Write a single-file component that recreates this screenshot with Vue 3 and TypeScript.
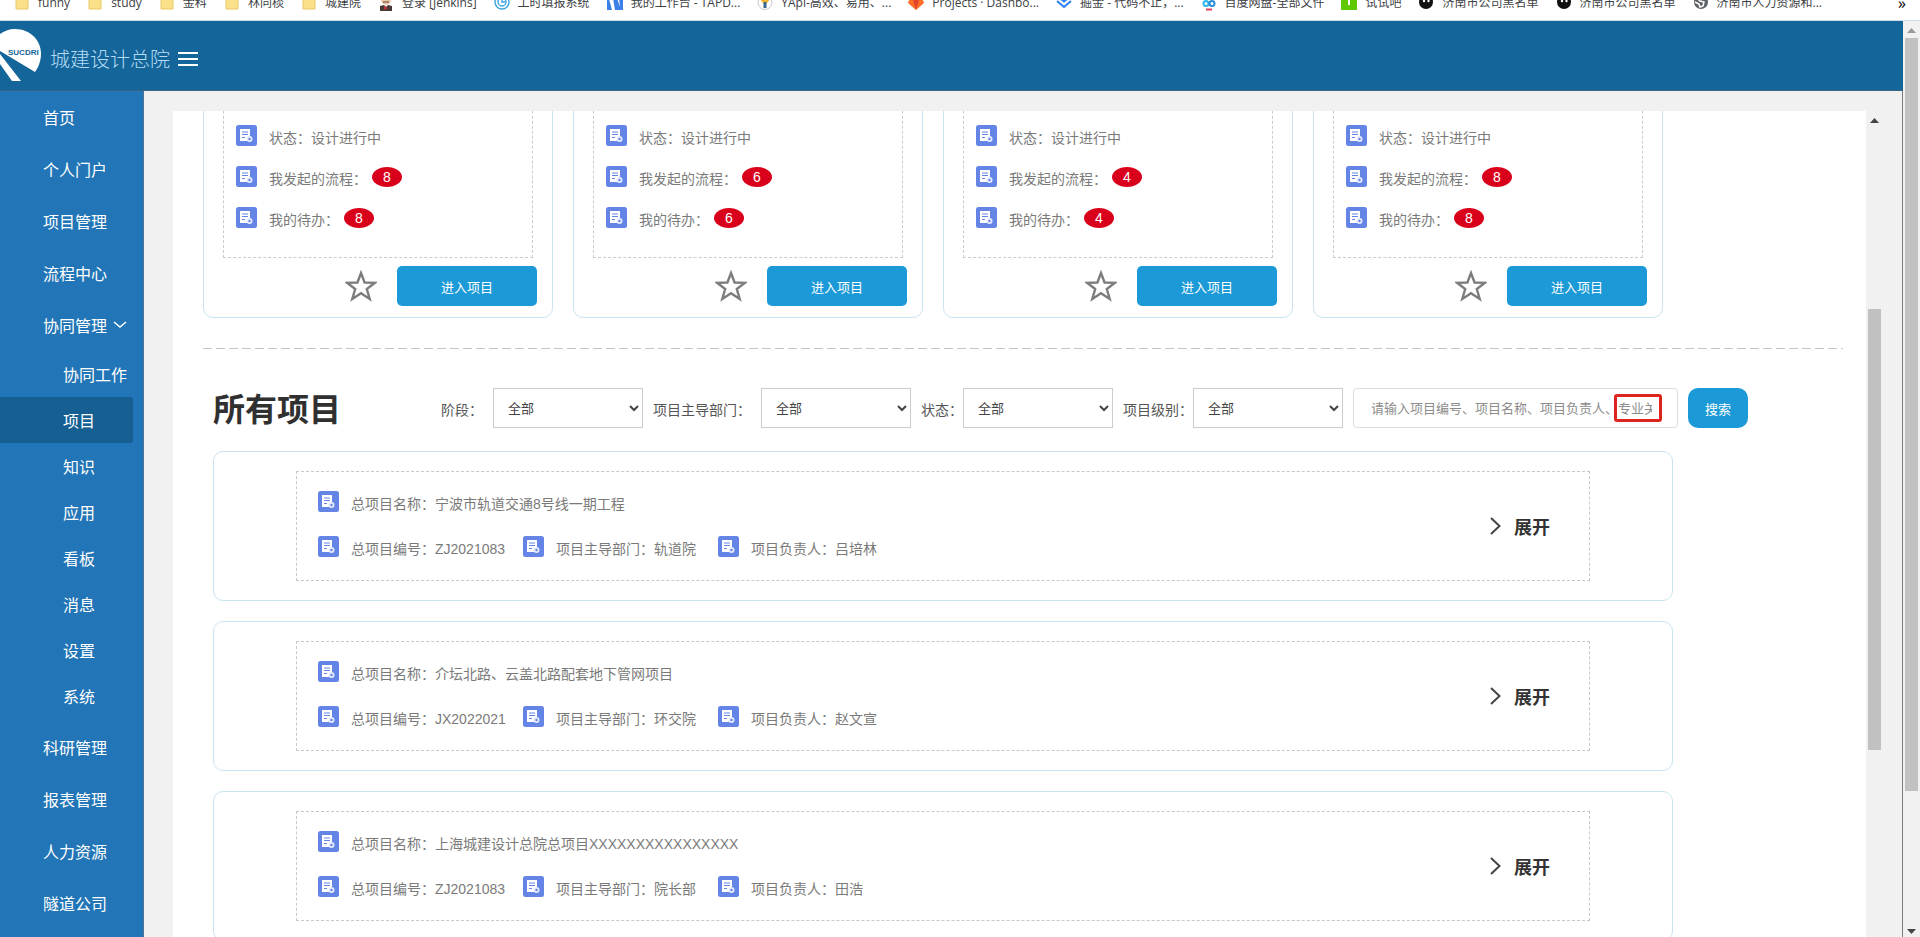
<script setup lang="ts">
import { ref } from 'vue'

interface Bookmark { icon: string; text: string }
interface ActiveProject { status: string; started: number; todo: number }
interface Project { name: string; code: string; dept: string; owner: string }
interface Filter { id: string; label: string; tight: boolean; value: string }

const bookmarks: Bookmark[] = [
  { icon: 'folder', text: 'funny' },
  { icon: 'folder', text: 'study' },
  { icon: 'folder', text: '金科' },
  { icon: 'folder', text: '林同棪' },
  { icon: 'folder', text: '城建院' },
  { icon: 'jenkins', text: '登录 [Jenkins]' },
  { icon: 'clock', text: '工时填报系统' },
  { icon: 'tapd', text: '我的工作台 - TAPD...' },
  { icon: 'yapi', text: 'YApi-高效、易用、...' },
  { icon: 'gitlab', text: 'Projects · Dashbo...' },
  { icon: 'juejin', text: '掘金 - 代码不止，...' },
  { icon: 'pan', text: '百度网盘-全部文件' },
  { icon: 'shishi', text: '试试吧' },
  { icon: 'penguin', text: '济南市公司黑名单' },
  { icon: 'penguin', text: '济南市公司黑名单' },
  { icon: 'globe', text: '济南市人力资源和...' },
]

const menuTop = ['首页', '个人门户', '项目管理', '流程中心']
const subMenu = ['协同工作', '项目', '知识', '应用', '看板', '消息', '设置', '系统']
const menuBottom = ['科研管理', '报表管理', '人力资源', '隧道公司']
const activeSub = ref('项目')

const activeProjects: ActiveProject[] = [
  { status: '设计进行中', started: 8, todo: 8 },
  { status: '设计进行中', started: 6, todo: 6 },
  { status: '设计进行中', started: 4, todo: 4 },
  { status: '设计进行中', started: 8, todo: 8 },
]

const filters = ref<Filter[]>([
  { id: 'stage', label: '阶段：', tight: false, value: '全部' },
  { id: 'dept', label: '项目主导部门：', tight: false, value: '全部' },
  { id: 'status', label: '状态：', tight: true, value: '全部' },
  { id: 'level', label: '项目级别：', tight: true, value: '全部' },
])
const keyword = ref('')

const projects: Project[] = [
  { name: '宁波市轨道交通8号线一期工程', code: 'ZJ2021083', dept: '轨道院', owner: '吕培林' },
  { name: '介坛北路、云盖北路配套地下管网项目', code: 'JX2022021', dept: '环交院', owner: '赵文宣' },
  { name: '上海城建设计总院总项目XXXXXXXXXXXXXXXX', code: 'ZJ2021083', dept: '院长部', owner: '田浩' },
]
</script>

<template>
  <div class="page">
    <svg width="0" height="0" class="defs" aria-hidden="true">
      <symbol id="doc" viewBox="0 0 21 21">
        <rect width="21" height="21" rx="2.500" fill="#6585e6" />
        <path d="M4 4h10v6.500l-2 3.500 1 2H4z" fill="#fff" />
        <path d="M6 7h6M6 9.500h6M6 12.500h3" stroke="#6585e6" stroke-width="1" />
        <circle cx="13.500" cy="14" r="3" fill="#e6ecff" />
        <circle cx="13.500" cy="14" r="1.200" fill="#6585e6" />
      </symbol>
    </svg>

    <nav class="bookmarks" aria-label="书签">
      <div class="bookmark-row">
        <a v-for="(b, i) in bookmarks" :key="i" href="#" class="bookmark">
          <svg class="fav" viewBox="0 0 16 16" aria-hidden="true">
            <path v-if="b.icon === 'folder'" d="M2 1h12v13H2z" fill="#fbe08a" stroke="#e8c766" />
            <g v-else-if="b.icon === 'jenkins'">
              <circle cx="8" cy="5" r="5" fill="#eec9a8" />
              <path d="M2 16V11l4-1 2 2 2-2 4 1v5z" fill="#4a3a35" />
              <path d="M6 11l4 2-4 2z" fill="#c3303a" />
              <path d="M5 7h6" stroke="#5a4036" />
            </g>
            <g v-else-if="b.icon === 'clock'" fill="none" stroke="#3aa3e0" stroke-width="1.400">
              <circle cx="8" cy="7" r="7" /><circle cx="8" cy="7" r="4" /><path d="M8 4v3h3" />
            </g>
            <g v-else-if="b.icon === 'tapd'">
              <path d="M0 0h16v15H0z" fill="#3d7fe8" />
              <path d="M2 4l4-1 2 12H5zM10 3h2l1 9z" fill="#fff" />
            </g>
            <g v-else-if="b.icon === 'yapi'">
              <circle cx="8" cy="7.500" r="7" fill="#fff" stroke="#c9c9c9" />
              <path d="M4 3l4 5 4-5" fill="none" stroke="#f0b429" stroke-width="3" />
              <path d="M8 7v6" stroke="#39668f" stroke-width="3" />
            </g>
            <g v-else-if="b.icon === 'gitlab'">
              <path d="M8 15L0 8 3 0l2 5h6l2-5 3 8z" fill="#fc6d26" />
              <path d="M8 15L5 5h6z" fill="#e24329" />
            </g>
            <path v-else-if="b.icon === 'juejin'" d="M1 6l7 6 7-6M5 4l3 2.500L11 4" fill="none" stroke="#2a7ff0" stroke-width="2" />
            <g v-else-if="b.icon === 'pan'" fill="none" stroke-width="2">
              <circle cx="5" cy="8.500" r="2.500" stroke="#29b6e8" />
              <circle cx="11" cy="8.500" r="2.500" stroke="#2a8fd8" />
              <path d="M5 14.500h6" stroke="#e5405a" />
            </g>
            <g v-else-if="b.icon === 'shishi'">
              <path d="M0 0h16v15H0z" fill="#5fc800" /><path d="M8 2v8" stroke="#fff" stroke-width="2" />
            </g>
            <g v-else-if="b.icon === 'penguin'">
              <circle cx="8" cy="7" r="7" fill="#111" />
              <circle cx="6" cy="6" r="1.200" fill="#fff" /><circle cx="10.500" cy="6" r="1.200" fill="#fff" />
            </g>
            <g v-else>
              <circle cx="8" cy="7" r="7" fill="#5f6368" />
              <path d="M4 3l3 3 4 1-1 4-3 1-1-3-4-2M9 1l3 3" fill="none" stroke="#fff" stroke-width="1.500" />
            </g>
          </svg>
          <span>{{ b.text }}</span>
        </a>
        <button class="more" type="button" aria-label="更多书签">»</button>
      </div>
    </nav>

    <div class="viewport">
      <div class="app">
        <header class="topbar">
          <svg class="logo" viewBox="0 0 42 54" aria-hidden="true">
            <path d="M0 5C4 2 9 0 15 0c15 0 26 11 26 25 0 7-3 14-6 18L0 22z" fill="#fff" />
            <path d="M0 25l21 27h-9L0 35z" fill="#fff" />
            <text x="8" y="26" font-size="8" font-weight="700" fill="#14659a" font-family="Liberation Sans, sans-serif">SUCDRI</text>
          </svg>
          <span class="brand">城建设计总院</span>
          <button class="burger" type="button" aria-label="折叠菜单">
            <svg width="20" height="16" viewBox="0 0 20 16"><path d="M0 2h20M0 8h20M0 14h20" stroke="#fff" stroke-width="2" /></svg>
          </button>
        </header>

        <div class="body">
          <aside class="sidebar">
            <a v-for="m in menuTop" :key="m" href="#" class="item">{{ m }}</a>
            <a href="#" class="item">协同管理
              <svg width="14" height="8" viewBox="0 0 14 8"><path d="M1 1l6 5 6-5" fill="none" stroke="#fff" stroke-width="1.500" /></svg>
            </a>
            <div class="sub">
              <a v-for="s in subMenu" :key="s" href="#" class="sub-item" :class="{ active: s === activeSub }" @click.prevent="activeSub = s">{{ s }}</a>
            </div>
            <a v-for="m in menuBottom" :key="m" href="#" class="item">{{ m }}</a>
          </aside>

          <main class="main">
            <div class="panel">
              <div class="content">
                <section class="cards">
                  <article v-for="(p, i) in activeProjects" :key="i" class="card">
                    <div class="card-info">
                      <div class="line"><svg class="doc"><use href="#doc" /></svg><span>状态：{{ p.status }}</span></div>
                      <div class="line"><svg class="doc"><use href="#doc" /></svg><span>我发起的流程：</span><b class="badge">{{ p.started }}</b></div>
                      <div class="line"><svg class="doc"><use href="#doc" /></svg><span>我的待办：</span><b class="badge">{{ p.todo }}</b></div>
                    </div>
                    <div class="card-actions">
                      <button class="star" type="button" aria-label="收藏">
                        <svg width="32" height="32" viewBox="0 0 32 32"><path d="M16 3l3.600 9.500 10.400.3-8.200 6.200 2.900 10L16 23.200 7.300 29l2.900-10L2 12.800l10.400-.3z" fill="none" stroke="#7d7d7d" stroke-width="2.400" /></svg>
                      </button>
                      <button class="enter" type="button">进入项目</button>
                    </div>
                  </article>
                </section>

                <hr class="divider" />

                <form class="toolbar" @submit.prevent>
                  <h2>所有项目</h2>
                  <div v-for="f in filters" :key="f.id" class="filter" :class="{ tight: f.tight }">
                    <label :for="f.id">{{ f.label }}</label>
                    <select :id="f.id" v-model="f.value"><option>全部</option></select>
                  </div>
                  <div class="search">
                    <input v-model="keyword" type="text" aria-label="关键字" placeholder="请输入项目编号、项目名称、项目负责人、专业关键字" />
                    <span class="mark"></span>
                  </div>
                  <button class="go" type="submit">搜索</button>
                </form>

                <section class="list">
                  <article v-for="(p, i) in projects" :key="i" class="row">
                    <div class="row-inner">
                      <div class="row-info">
                        <div class="line"><svg class="doc"><use href="#doc" /></svg><span>总项目名称：{{ p.name }}</span></div>
                        <div class="meta">
                          <div class="line"><svg class="doc"><use href="#doc" /></svg><span>总项目编号：{{ p.code }}</span></div>
                          <div class="line"><svg class="doc"><use href="#doc" /></svg><span>项目主导部门：{{ p.dept }}</span></div>
                          <div class="line"><svg class="doc"><use href="#doc" /></svg><span>项目负责人：{{ p.owner }}</span></div>
                        </div>
                      </div>
                      <button class="expand" type="button">
                        <svg width="12" height="20" viewBox="0 0 12 20"><path d="M1 2l8.500 8L1 18" fill="none" stroke="#444" stroke-width="2" /></svg>
                        展开
                      </button>
                    </div>
                  </article>
                </section>
              </div>
            </div>
            <div class="bar inner-bar">
              <svg width="9" height="5" viewBox="0 0 9 5"><path d="M0 5l4.500-5L9 5z" fill="#444" /></svg>
              <div class="inner-track"><i class="inner-thumb"></i></div>
            </div>
          </main>
        </div>
      </div>
      <div class="bar outer-bar">
        <svg width="9" height="5" viewBox="0 0 9 5"><path d="M0 5l4.500-5L9 5z" fill="#999" /></svg>
        <div class="outer-track"><i class="outer-thumb"></i></div>
        <svg width="9" height="5" viewBox="0 0 9 5"><path d="M0 0l4.500 5L9 0z" fill="#444" /></svg>
      </div>
    </div>
  </div>
</template>

<style>
body { margin: 0; overflow: hidden; }
</style>

<style scoped>
* { box-sizing: border-box; }
.page {
  height: 100vh;
  display: flex;
  flex-direction: column;
  overflow: hidden;
  background: #fff;
  color: #666;
  font-family: "Liberation Sans", "Noto Sans CJK SC", sans-serif;
  font-size: 14px;
}
.defs { display: none; }
a { color: inherit; text-decoration: none; }
button { font: inherit; border: 0; padding: 0; background: none; cursor: pointer; }

.bookmarks { flex: none; height: 21px; overflow: hidden; border-bottom: 1px solid #cfdde6; }
.bookmark-row {
  display: flex;
  align-items: center;
  gap: 17px;
  height: 34px;
  margin-top: -14px;
  padding: 0 14px;
  font-family: "Open Sans", "Noto Sans CJK SC", sans-serif;
  font-size: 12px;
  line-height: 34px;
  color: #3c4043;
  white-space: nowrap;
}
.bookmark { display: flex; align-items: center; gap: 8px; }
.fav { width: 16px; height: 16px; flex: none; }
.more { margin-left: auto; font-size: 16px; }

.viewport { flex: 1; min-height: 0; display: flex; }
.app { flex: 1; min-width: 0; display: flex; flex-direction: column; }
.topbar {
  flex: none;
  height: 70px;
  display: flex;
  align-items: center;
  background: #14659a;
  border-bottom: 1px solid #3b6384;
}
.logo { width: 42px; height: 54px; }
.brand { margin-left: 8px; padding-top: 8px; font-size: 20px; font-weight: 300; line-height: 24px; color: #b5dcf5; }
.burger { margin-left: 8px; padding-top: 6px; display: flex; }

.body { flex: 1; min-height: 0; display: flex; }
.sidebar {
  flex: none;
  width: 144px;
  overflow: hidden;
  background: #2275b6;
  border-right: 1px solid #52728f;
  color: #fff;
  font-size: 16px;
}
.item { display: flex; align-items: center; gap: 6px; height: 52px; padding-left: 43px; white-space: nowrap; }
.sub { padding-bottom: 2px; }
.sub-item { display: flex; align-items: center; height: 46px; margin-right: 10px; padding-left: 63px; white-space: nowrap; }
.sub-item.active { background: #165f93; border-radius: 0 2px 2px 0; }

.main {
  flex: 1;
  min-width: 0;
  display: flex;
  padding: 20px 19px 0 29px;
  background: #f1f1f1;
  border-right: 1px solid #7d7d7d;
}
.panel { flex: 1; min-width: 0; overflow: hidden; background: #fff; }
.content { margin-top: -40px; padding: 0 23px 0 30px; }

.cards { display: grid; grid-template-columns: repeat(4, minmax(0, 350px)); gap: 20px; }
.card { border: 1px solid #c9e4f0; border-radius: 10px; padding: 19px 15px 11px 19px; }
.card-info {
  display: grid;
  gap: 14px;
  margin-right: 4px;
  padding: 33px 12px 23px;
  border: 1px dashed #c8cdd2;
}
.line { display: flex; align-items: flex-start; line-height: 27px; color: #7a7a7a; white-space: nowrap; }
.doc { width: 21px; height: 21px; flex: none; margin-right: 12px; }
.badge {
  width: 30px;
  height: 20px;
  margin: 1px 0 0 5px;
  border-radius: 50%;
  background: #d9001b;
  color: #fff;
  font-weight: 400;
  line-height: 20px;
  text-align: center;
}
.card-actions { display: flex; justify-content: flex-end; align-items: center; gap: 20px; margin-top: 8px; }
.star { display: flex; }
.enter { width: 140px; height: 40px; border-radius: 5px; background: #1b9ad7; color: #fff; font-size: 13px; }

.divider {
  height: 1px;
  margin: 30px 0 39px;
  border: 0;
  background: repeating-linear-gradient(90deg, #c4c4c4 0 9px, transparent 9px 13px);
}

.toolbar { display: flex; align-items: center; gap: 10px; padding-left: 10px; color: #555; }
.toolbar h2 { margin: 0 90px 0 0; padding-top: 4px; font-size: 32px; line-height: 34px; color: #303030; white-space: nowrap; }
.filter { display: flex; align-items: center; gap: 10px; white-space: nowrap; }
.filter.tight { gap: 0; }
.filter label { padding-top: 1px; }
.filter select {
  width: 150px;
  height: 40px;
  padding: 0 10px;
  border: 1px solid #ccc;
  border-radius: 0;
  background: #fff;
  color: #444;
  font: inherit;
  font-size: 13px;
}
.search { position: relative; flex: 0 1 325px; }
.search input {
  width: 100%;
  height: 40px;
  padding: 0 25px 0 17px;
  border: 1px solid #ddd;
  border-radius: 4px;
  font: inherit;
  font-size: 13px;
  outline: 0;
}
.search input::placeholder { color: #8c8c8c; }
.mark {
  position: absolute;
  top: 6px;
  right: 16px;
  width: 48px;
  height: 28px;
  border: 3px solid #dd241f;
  border-radius: 3px;
  pointer-events: none;
}
.go { width: 60px; height: 40px; border-radius: 10px; background: #1b9ad7; color: #fff; font-size: 13px; }

.list { display: grid; gap: 20px; margin: 23px 0 0 10px; max-width: 1460px; }
.row { border: 1px solid #c9e4f0; border-radius: 10px; padding: 19px 82px; }
.row-inner {
  display: flex;
  justify-content: space-between;
  height: 110px;
  padding: 19px 39px 0 21px;
  border: 1px dashed #c8c8c8;
}
.row-info { display: grid; gap: 18px; align-content: start; }
.meta { display: grid; grid-template-columns: 205px 195px auto; }
.expand { display: flex; align-items: center; gap: 12px; height: 70px; font-size: 18px; font-weight: 700; color: #333; }

.bar { flex: none; width: 17px; display: flex; flex-direction: column; align-items: center; background: #f1f1f1; }
.bar svg { flex: none; }
.inner-bar { padding: 7px 0; }
.inner-track { flex: 1; width: 13px; padding-top: 186px; }
.inner-thumb { display: block; height: 71%; background: #c1c1c1; }
.outer-bar { padding: 7px 0 3px; }
.outer-track { flex: 1; width: 13px; padding: 5px 0; }
.outer-thumb { display: block; height: 85%; background: #c1c1c1; }
</style>
